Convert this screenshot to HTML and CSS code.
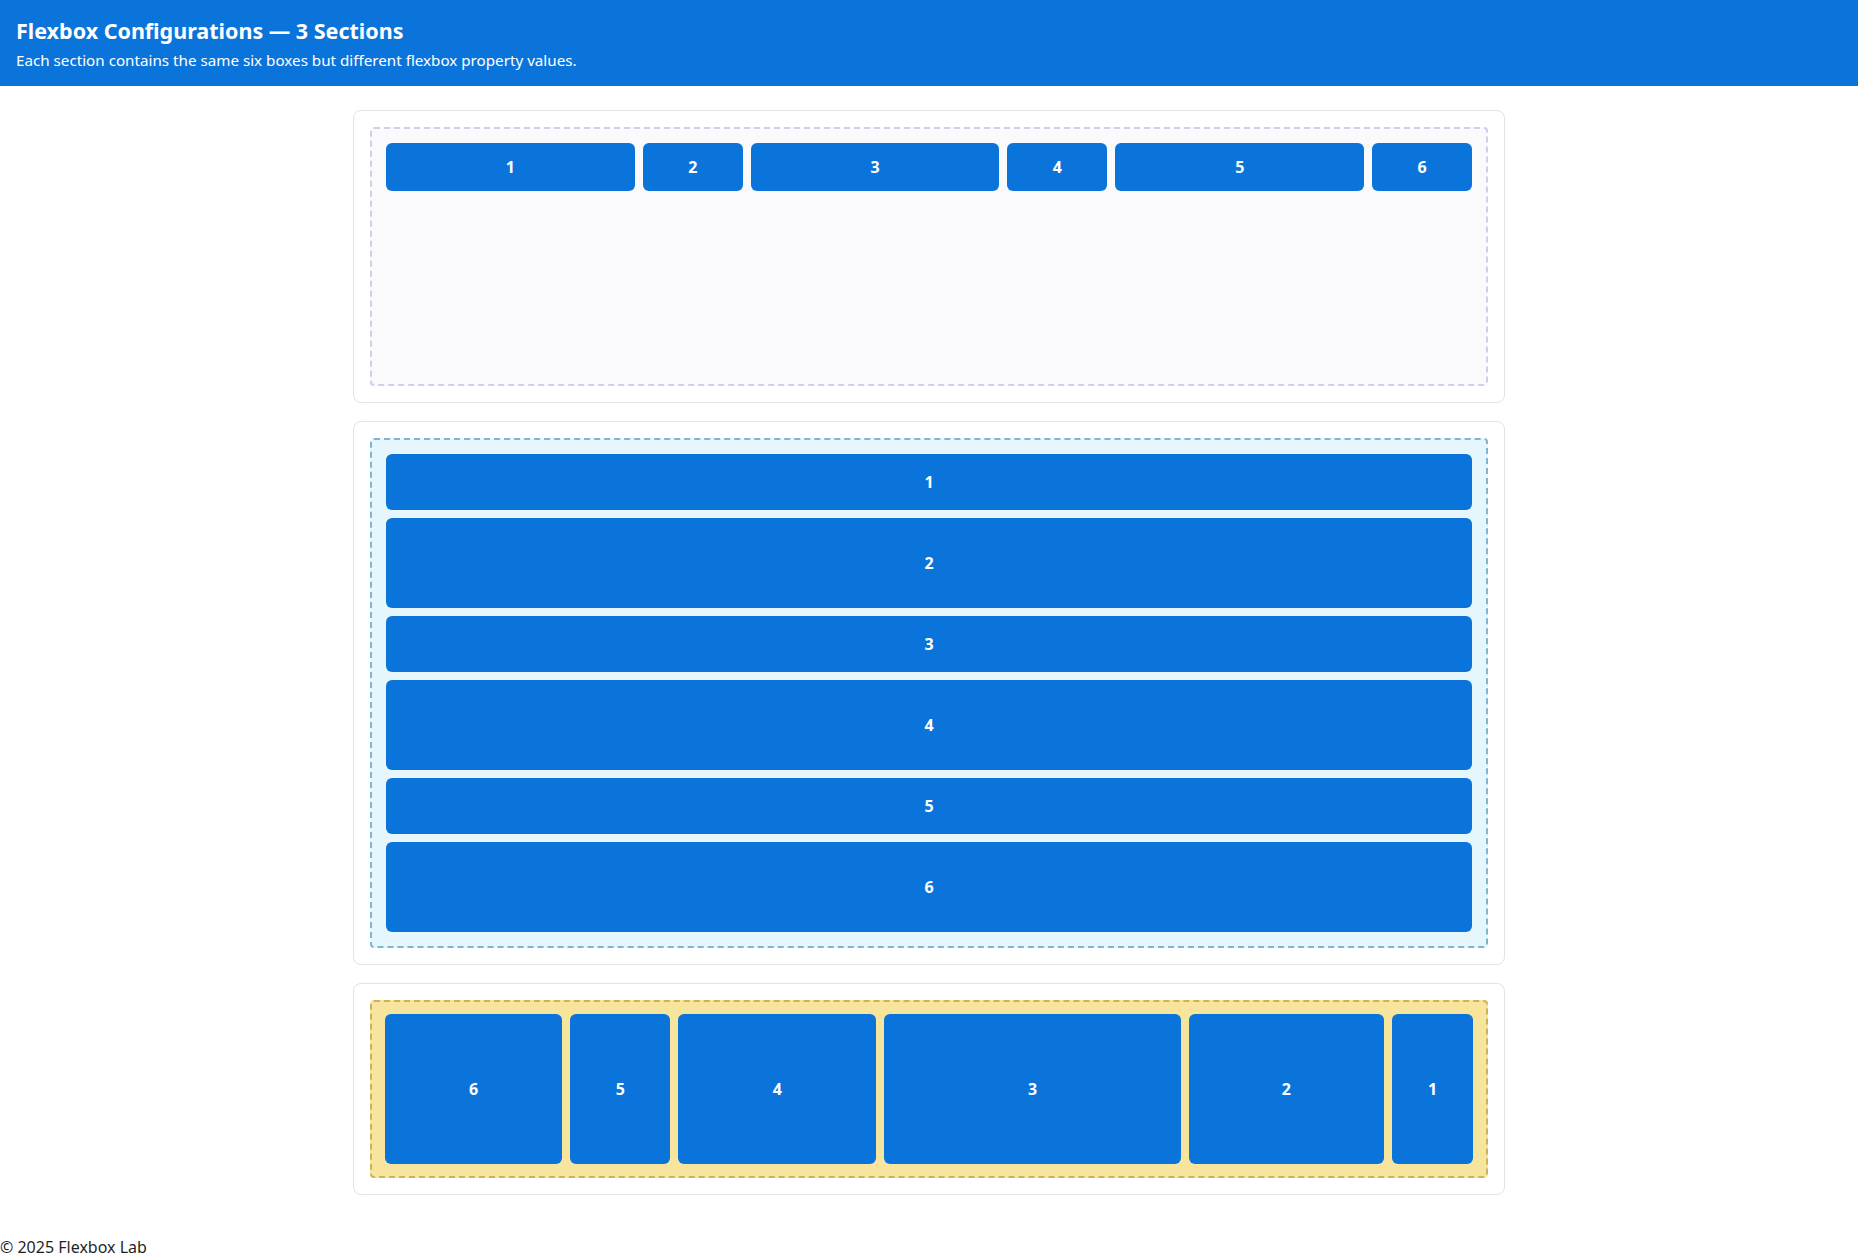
FILE: index.html
```html
<!DOCTYPE html>
<html lang="en">
<head>
<meta charset="utf-8">
<title>Flexbox Configurations — 3 Sections</title>
<link rel="stylesheet" href="styles.css">
</head>
<body>
<header class="top">
  <h1 class="title">Flexbox Configurations — 3 Sections</h1>
  <p class="sub">Each section contains the same six boxes but different flexbox property values.</p>
</header>
<main class="main">
  <section class="card">
    <div class="flex flex-a">
      <div class="box wide">1</div>
      <div class="box narrow">2</div>
      <div class="box wide">3</div>
      <div class="box narrow">4</div>
      <div class="box wide">5</div>
      <div class="box narrow">6</div>
    </div>
  </section>
  <section class="card">
    <div class="flex flex-b">
      <div class="box short">1</div>
      <div class="box tall">2</div>
      <div class="box short">3</div>
      <div class="box tall">4</div>
      <div class="box short">5</div>
      <div class="box tall">6</div>
    </div>
  </section>
  <section class="card">
    <div class="flex flex-c">
      <div class="box c1">1</div>
      <div class="box c2">2</div>
      <div class="box c3">3</div>
      <div class="box c4">4</div>
      <div class="box c5">5</div>
      <div class="box c6">6</div>
    </div>
  </section>
</main>
<footer class="foot">© 2025 Flexbox Lab</footer>
</body>
</html>
```
FILE: styles.css
```css
* { box-sizing: border-box; }
html, body { margin: 0; padding: 0; }
body {
  font-family: "Noto Sans", "Open Sans", sans-serif;
  color: #1f1f1f;
  background: #ffffff;
}
.top {
  background: #0b74da;
  color: #ffffff;
  padding: 16px 16px 16px;
  height: 86px;
}
.title {
  margin: 0;
  font-size: 21.5px;
  font-weight: 700;
  line-height: 30px;
}
.sub {
  margin: 4px 0 0;
  font-size: 15.2px;
  line-height: 20px;
}
.main {
  padding: 24px 0 41px;
  display: flex;
  flex-direction: column;
  align-items: center;
  gap: 18px;
}
.card {
  width: 1152px;
  border: 1px solid #e3e3e6;
  border-radius: 8px;
  padding: 16px;
  background: #ffffff;
}
.flex {
  display: flex;
  gap: 8px;
  border: 2px dashed;
  border-radius: 4px;
  padding: 14px;
}
.box {
  background: #0b74da;
  color: #ffffff;
  font-weight: 700;
  font-size: 16px;
  border-radius: 6px;
  display: flex;
  align-items: center;
  justify-content: center;
}
.flex-a {
  background: #fafafd;
  border-color: #d2cde8;
  align-items: flex-start;
  min-height: 259px;
}
.flex-a .box { height: 48px; }
.wide { flex: 249 1 0; }
.narrow { flex: 100 1 0; }
.flex-b {
  background: #e6f6fd;
  border-color: #7fb5d3;
  flex-direction: column;
}
.short { height: 56px; }
.tall { height: 90px; }
.flex-c {
  background: #f8e59d;
  border-color: #c9b45c;
  flex-direction: row-reverse;
  padding: 12px 13px;
}
.flex-c .box { height: 150px; }
.c6 { flex: 177 1 0; }
.c5 { flex: 100 1 0; }
.c4 { flex: 198 1 0; }
.c3 { flex: 296 1 0; }
.c2 { flex: 195 1 0; }
.c1 { flex: 81 1 0; }
.foot {
  font-size: 16px;
  line-height: 22px;
  padding: 0;
}
```
